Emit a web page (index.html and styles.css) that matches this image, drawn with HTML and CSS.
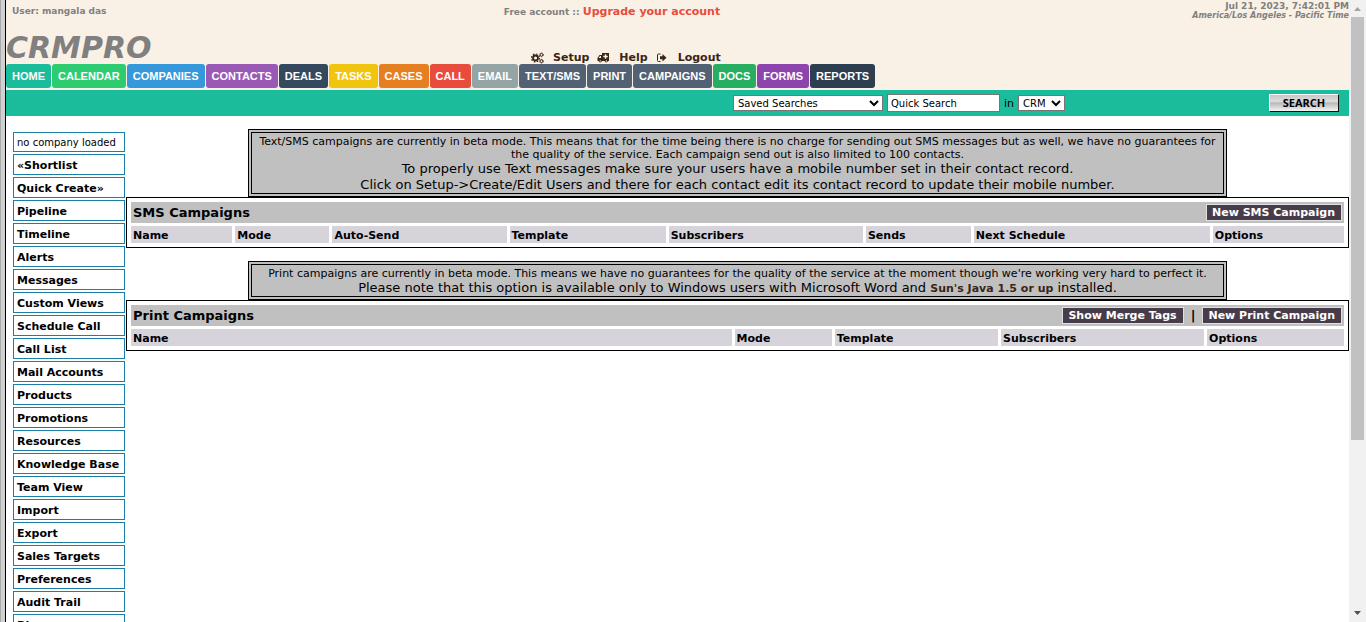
FILE: index.html
```html
<!DOCTYPE html>
<html lang="en">
<head>
<meta charset="utf-8">
<title>CRMPRO - Campaigns</title>
<link rel="stylesheet" href="styles.css">
</head>
<body>
<div class="edge"></div>
<div class="page">
  <header class="header">
    <div class="topline">
      <div class="user">User: mangala das</div>
      <div class="account">Free account :: <a class="upgrade" href="#">Upgrade your account</a></div>
      <div class="clock"><div>Jul 21, 2023, 7:42:01 PM</div><div class="zone">America/Los Angeles - Pacific Time</div></div>
    </div>
    <div class="brandline">
      <div class="logo">CRMPRO</div>
      <div class="tools">
        <a href="#"><svg class="icon" width="13" height="12" viewBox="0 0 13 12"><circle cx="4.5" cy="6" r="2.5" fill="none" stroke="currentColor" stroke-width="1.8"/><circle cx="4.5" cy="6" r="4" fill="none" stroke="currentColor" stroke-width="1.2" stroke-dasharray="1.57 1.57"/><circle cx="10.5" cy="2.8" r="1.4" fill="none" stroke="currentColor"/><circle cx="10.5" cy="2.8" r="2" fill="none" stroke="currentColor" stroke-width=".7" stroke-dasharray="1 1.1"/><circle cx="10.5" cy="9.2" r="1.4" fill="none" stroke="currentColor"/><circle cx="10.5" cy="9.2" r="2" fill="none" stroke="currentColor" stroke-width=".7" stroke-dasharray="1 1.1"/></svg>Setup</a>
        <a href="#"><svg class="icon" width="13" height="12" viewBox="0 0 13 12"><path fill="currentColor" fill-rule="evenodd" d="M5 1h7v8h-1a1.8 1.8 0 0 1-3.5 0H5A1.8 1.8 0 0 1 1.500 9H.5V6L2.500 3H5zM3 4L1.600 6H4V4zM7.800 2.200v1.500H6.300v1.600h1.500v1.500h1.500V5.300h1.500V3.700H9.300V2.200zM2.500 9a.7.7 0 1 0 1.400 0a.7.7 0 1 0-1.400 0M8.600 9a.7.7 0 1 0 1.400 0a.7.7 0 1 0-1.400 0"/></svg>Help</a>
        <a href="#"><svg class="icon" width="13" height="12" viewBox="0 0 13 12"><path fill="none" stroke="currentColor" d="M4.500 2H2.500Q1.500 2 1.500 3V8.500Q1.500 9.500 2.500 9.500H4.500"/><path fill="currentColor" d="M4 4.300H6.500V2L10.500 5.800L6.500 9.600V7.300H4z"/></svg>Logout</a>
      </div>
    </div>
    <nav class="nav">
      <a class="home" href="#">HOME</a><a class="calendar" href="#">CALENDAR</a><a class="companies" href="#">COMPANIES</a><a class="contacts" href="#">CONTACTS</a><a class="deals" href="#">DEALS</a><a class="tasks" href="#">TASKS</a><a class="cases" href="#">CASES</a><a class="call" href="#">CALL</a><a class="email" href="#">EMAIL</a><a class="slate" href="#">TEXT/SMS</a><a class="slate" href="#">PRINT</a><a class="slate" href="#">CAMPAIGNS</a><a class="docs" href="#">DOCS</a><a class="forms" href="#">FORMS</a><a class="reports" href="#">REPORTS</a>
    </nav>
  </header>
  <form class="search">
    <select class="saved" aria-label="Saved searches"><option>Saved Searches</option></select>
    <input class="quick" type="text" value="Quick Search" aria-label="Quick search">
    <label for="scope">in</label>
    <select class="scope" id="scope"><option>CRM</option></select>
    <button class="go" type="button">SEARCH</button>
  </form>
  <div class="content">
    <aside class="sidebar">
      <div class="loaded">no company loaded</div>
      <a href="#">«Shortlist</a>
      <a href="#">Quick Create»</a>
      <a href="#">Pipeline</a>
      <a href="#">Timeline</a>
      <a href="#">Alerts</a>
      <a href="#">Messages</a>
      <a href="#">Custom Views</a>
      <a href="#">Schedule Call</a>
      <a href="#">Call List</a>
      <a href="#">Mail Accounts</a>
      <a href="#">Products</a>
      <a href="#">Promotions</a>
      <a href="#">Resources</a>
      <a href="#">Knowledge Base</a>
      <a href="#">Team View</a>
      <a href="#">Import</a>
      <a href="#">Export</a>
      <a href="#">Sales Targets</a>
      <a href="#">Preferences</a>
      <a href="#">Audit Trail</a>
      <a href="#">Blogs</a>
    </aside>
    <main class="main">
      <div class="notice">
        <div class="small">Text/SMS campaigns are currently in beta mode. This means that for the time being there is no charge for sending out SMS messages but as well, we have no guarantees for the quality of the service. Each campaign send out is also limited to 100 contacts.</div>
        <div>To properly use Text messages make sure your users have a mobile number set in their contact record.</div>
        <div>Click on Setup-&gt;Create/Edit Users and there for each contact edit its contact record to update their mobile number.</div>
      </div>
      <table class="grid sms">
        <colgroup><col class="s1"><col class="s2"><col class="s3"><col class="s4"><col class="s5"><col class="s6"><col class="s7"><col class="s8"></colgroup>
        <tr><td class="title" colspan="8"><div class="titlebar"><span>SMS Campaigns</span><span class="actions"><a href="#">New SMS Campaign</a></span></div></td></tr>
        <tr><th>Name</th><th>Mode</th><th>Auto-Send</th><th>Template</th><th>Subscribers</th><th>Sends</th><th>Next Schedule</th><th>Options</th></tr>
      </table>
      <div class="notice second">
        <div class="small">Print campaigns are currently in beta mode. This means we have no guarantees for the quality of the service at the moment though we're working very hard to perfect it.</div>
        <div>Please note that this option is available only to Windows users with Microsoft Word and <a href="#">Sun's Java 1.5 or up</a> installed.</div>
      </div>
      <table class="grid print">
        <colgroup><col class="p1"><col class="p2"><col class="p3"><col class="p4"><col class="p5"></colgroup>
        <tr><td class="title" colspan="5"><div class="titlebar"><span>Print Campaigns</span><span class="actions"><a href="#">Show Merge Tags</a><span>|</span><a href="#">New Print Campaign</a></span></div></td></tr>
        <tr><th>Name</th><th>Mode</th><th>Template</th><th>Subscribers</th><th>Options</th></tr>
      </table>
    </main>
  </div>
</div>
<div class="scrollbar">
  <svg width="17" height="17" viewBox="0 0 17 17"><path fill="#a3a3a3" d="M5 11L8.500 7L12 11z"/></svg>
  <div class="track"><div class="thumb"></div></div>
  <svg width="17" height="17" viewBox="0 0 17 17"><path fill="#505050" d="M5 6H12L8.500 10z"/></svg>
</div>
</body>
</html>
```
FILE: styles.css
```css
* { box-sizing: border-box; }
body {
  margin: 0;
  height: 100vh;
  display: flex;
  overflow: hidden;
  background: #fff;
  color: #000;
  font: 11px/13px "DejaVu Sans", sans-serif;
}
a { text-decoration: none; color: inherit; }

.edge {
  flex: 0 0 6px;
  background: #d0d0d0;
  border-left: 1px solid #a9a9a9;
  border-right: 1px solid #000;
}
.page { flex: 1; min-width: 0; }

.header { background: #faf1e6; padding-bottom: 2px; }
.topline {
  display: grid;
  grid-template-columns: 1fr auto 1fr;
  height: 30px;
  color: #808080;
  font-weight: bold;
  font-size: 9px;
}
.user { padding: 5px 6px 0; }
.account { padding: 5px 0 0; margin-right: 131px; }
.upgrade { color: #e74c3c; font-size: 11px; }
.clock { padding-top: 1px; text-align: right; line-height: 10px; }
.zone { font-size: 8px; font-style: italic; }
.brandline { display: flex; height: 34px; }
.logo {
  flex: 0 0 525px;
  color: #808080;
  font: italic bold 30px/36px "DejaVu Sans", sans-serif;
}
.tools {
  display: flex;
  align-items: flex-end;
  gap: 8px;
  color: #3b2514;
  font-weight: bold;
}
.tools a { display: flex; align-items: center; gap: 9px; line-height: 12px; }
.icon { display: block; }

.nav { display: flex; gap: 1px; }
.nav a {
  padding: 0 6px;
  border-radius: 3px;
  color: #fff;
  font: bold 11px/24px "Liberation Sans", Arial, sans-serif;
}
.home { background: #1abc9c; }
.calendar { background: #2ecc71; }
.companies { background: #3498db; }
.contacts { background: #9b59b6; }
.deals { background: #34495e; }
.tasks { background: #f1c40f; }
.cases { background: #e67e22; }
.call { background: #e74c3c; }
.email { background: #95a5a6; }
.slate { background: #526174; }
.docs { background: #27ae60; }
.forms { background: #8e44ad; }
.reports { background: #2c3e50; }

.search {
  display: flex;
  align-items: center;
  justify-content: flex-end;
  gap: 4px;
  height: 26px;
  padding-right: 10px;
  background: #1abc9c;
}
.search select, .quick {
  background: #fff;
  border: 1px solid #767676;
  border-radius: 0;
  color: #000;
  font: 10px "DejaVu Sans", sans-serif;
}
.search select { height: 16px; padding: 0; }
.saved { width: 150px; }
.quick { width: 113px; height: 18px; padding: 1px 3px; }
.scope { width: 47px; }
.go {
  width: 70px;
  height: 18px;
  margin-left: 200px;
  padding: 0;
  border: 1px solid;
  border-color: #fff #111 #111 #fff;
  background: linear-gradient(#c8c8c8, #dcdcdc 40%, #b8b8b8 50%, #f4f4f4);
  color: #000;
  font: bold 11px/14px "Open Sans", sans-serif;
}

.content { display: flex; padding-top: 13px; }
.sidebar {
  flex: 0 0 120px;
  display: flex;
  flex-direction: column;
  gap: 2px;
  padding: 3px 1px 0 7px;
}
.sidebar a, .loaded {
  border: 1px solid #1a7fa5;
  padding: 2px 3px 0;
  font-weight: bold;
  line-height: 17px;
}
.sidebar .loaded { padding-top: 1px; font-weight: normal; font-size: 10px; line-height: 17px; }

.main { flex: 1; min-width: 0; }
.notice {
  width: 80%;
  margin: 0 auto;
  border: 4px double #000;
  padding: 2px 0 0;
  background: #c0c0c0;
  text-align: center;
  font-size: 13px;
  line-height: 16px;
}
.small { font-size: 11px; line-height: 13px; }
.notice a { color: #3b2514; font-size: 11px; font-weight: bold; line-height: 1; }
.second { margin-top: 13px; }

.grid {
  width: 100%;
  table-layout: fixed;
  border: 1px solid #000;
  border-collapse: separate;
  border-spacing: 3px;
  padding: 1px;
}
.title { background: #c0c0c0; padding: 0 2px; }
.titlebar {
  display: flex;
  justify-content: space-between;
  align-items: center;
  height: 21px;
  font-size: 13px;
  font-weight: bold;
}
.actions { display: flex; align-items: center; gap: 7px; }
.actions a {
  border: 1px solid #e0e0e0;
  padding: 0 6px 0 5px;
  background: #473c49;
  color: #fff;
  font-size: 11px;
  line-height: 15px;
}
.grid th {
  background: #d6d3db;
  padding: 2px 2px 0;
  text-align: left;
  line-height: 15px;
}
.s1 { width: 8.5%; }
.s2 { width: 7.9%; }
.s3 { width: 14.6%; }
.s4 { width: 13.1%; }
.s5 { width: 16.3%; }
.s6 { width: 8.8%; }
.s7 { width: 19.8%; }
.s8 { width: 11%; }
.p1 { width: 50%; }
.p2 { width: 8.1%; }
.p3 { width: 13.6%; }
.p4 { width: 16.9%; }
.p5 { width: 11.4%; }

.scrollbar {
  flex: 0 0 17px;
  display: flex;
  flex-direction: column;
  background: #f1f1f1;
}
.track { flex: 1; padding: 0 2px; }
.thumb { height: 72%; background: #c1c1c1; }
```
